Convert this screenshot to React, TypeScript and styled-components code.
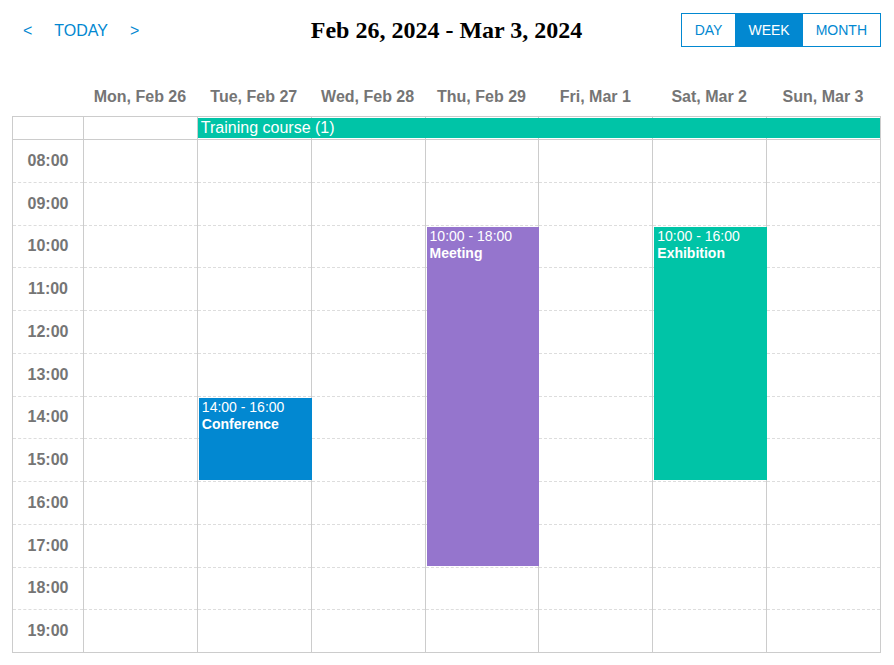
import React from 'react';
import styled, { createGlobalStyle } from 'styled-components';

const SLOT = 42.75;
const START_HOUR = 8;
const hours = ['08:00', '09:00', '10:00', '11:00', '12:00', '13:00', '14:00', '15:00', '16:00', '17:00', '18:00', '19:00'];
const days = ['Mon, Feb 26', 'Tue, Feb 27', 'Wed, Feb 28', 'Thu, Feb 29', 'Fri, Mar 1', 'Sat, Mar 2', 'Sun, Mar 3'];

type CalEvent = { day: number; start: number; end: number; title: string; label: string; color: string };

const events: CalEvent[] = [
	{ day: 1, start: 14, end: 16, label: '14:00 - 16:00', title: 'Conference', color: '#0288d1' },
	{ day: 3, start: 10, end: 18, label: '10:00 - 18:00', title: 'Meeting', color: '#9575cd' },
	{ day: 5, start: 10, end: 16, label: '10:00 - 16:00', title: 'Exhibition', color: '#00c4a7' },
];

const GlobalStyle = createGlobalStyle`
	body {
		margin: 0;
		background: #fff;
		font-family: "Liberation Sans", Arial, sans-serif;
	}
`;

function App() {
	return (
		<Page>
			<GlobalStyle />
			<Toolbar>
				<NavGroup>
					<NavButton>&lt;</NavButton>
					<NavButton>TODAY</NavButton>
					<NavButton>&gt;</NavButton>
				</NavGroup>
				<Title>Feb 26, 2024 - Mar 3, 2024</Title>
				<ViewGroup>
					<ViewButton>DAY</ViewButton>
					<ViewButton $active>WEEK</ViewButton>
					<ViewButton>MONTH</ViewButton>
				</ViewGroup>
			</Toolbar>
			<DayHeader>
				<span />
				{days.map((d) => (
					<DayName key={d}>{d}</DayName>
				))}
			</DayHeader>
			<Calendar>
				<AllDayRow>
					<AllDayCell $col={1} $first />
					{days.map((d, i) => (
						<AllDayCell key={d} $col={i + 2} />
					))}
					<AllDayEvent $from={3} $to={9}>Training course (1)</AllDayEvent>
				</AllDayRow>
				<Body>
					<TimeColumn>
						{hours.map((h, i) => (
							<Slot key={h} $first={i === 0}>
								<TimeLabel>{h}</TimeLabel>
							</Slot>
						))}
					</TimeColumn>
					{days.map((d, di) => (
						<DayColumn key={d}>
							{hours.map((h, i) => (
								<Slot key={h} $first={i === 0} />
							))}
							{events
								.filter((e) => e.day === di)
								.map((e) => (
									<EventBox
										key={e.title}
										$color={e.color}
										style={{
											top: (e.start - START_HOUR) * SLOT + 2,
											height: (e.end - e.start) * SLOT - 3,
										}}
									>
										<EventTime>{e.label}</EventTime>
										<EventTitle>{e.title}</EventTitle>
									</EventBox>
								))}
						</DayColumn>
					))}
				</Body>
			</Calendar>
		</Page>
	);
}

const Page = styled.div`
	padding: 13px 13px 12px 12px;
	width: 894px;
	box-sizing: border-box;
`;

const Toolbar = styled.div`
	display: grid;
	grid-template-columns: 1fr auto 1fr;
	align-items: center;
	height: 34px;
`;

const NavGroup = styled.div`
	display: flex;
	align-items: center;
`;

const NavButton = styled.button`
	background: none;
	border: none;
	padding: 2px 11px 0;
	height: 34px;
	color: #0288d1;
	font-family: "Liberation Sans", Arial, sans-serif;
	font-size: 16px;
	cursor: pointer;
`;

const Title = styled.h1`
	margin: 0;
	font-family: "Liberation Serif", "Times New Roman", serif;
	font-weight: bold;
	font-size: 24px;
	color: #000;
`;

const ViewGroup = styled.div`
	justify-self: end;
	display: flex;
	border: 1px solid #0288d1;
	height: 34px;
	box-sizing: border-box;
`;

const ViewButton = styled.button<{ $active?: boolean }>`
	border: none;
	padding: 0 13px;
	font-family: "Liberation Sans", Arial, sans-serif;
	font-size: 14px;
	background: ${(p) => (p.$active ? '#0288d1' : '#fff')};
	color: ${(p) => (p.$active ? '#fff' : '#0288d1')};
	cursor: pointer;
`;

const DayHeader = styled.div`
	display: grid;
	grid-template-columns: 71px repeat(7, 1fr);
	margin-top: 30px;
	height: 39px;
	align-items: center;
	width: 869px;
	box-sizing: border-box;
	padding-right: 1px;
`;

const DayName = styled.div`
	text-align: center;
	font-weight: bold;
	font-size: 16px;
	color: #757575;
	white-space: nowrap;
`;

const Calendar = styled.div`
	width: 869px;
	box-sizing: border-box;
	border: 1px solid #ccc;
`;

const AllDayRow = styled.div`
	display: grid;
	grid-template-columns: 70px repeat(7, 1fr);
	height: 22px;
`;

const AllDayCell = styled.div<{ $col: number; $first?: boolean }>`
	grid-row: 1;
	grid-column: ${(p) => p.$col};
	border-left: ${(p) => (p.$first ? 'none' : '1px solid #ccc')};
`;

const AllDayEvent = styled.div<{ $from: number; $to: number }>`
	grid-row: 1;
	grid-column: ${(p) => `${p.$from} / ${p.$to}`};
	margin: 1px 0 1px 1px;
	background: #00c4a7;
	color: #fff;
	font-size: 16px;
	line-height: 20px;
	padding: 0 3px;
	white-space: nowrap;
	overflow: hidden;
`;

const Body = styled.div`
	display: flex;
`;

const TimeColumn = styled.div`
	width: 70px;
	flex: none;
`;

const DayColumn = styled.div`
	flex: 1;
	min-width: 0;
	position: relative;
	border-left: 1px solid #ccc;
`;

const Slot = styled.div<{ $first?: boolean }>`
	height: ${SLOT}px;
	box-sizing: border-box;
	border-top: ${(p) => (p.$first ? '1px solid #ccc' : '1px dashed #ddd')};
	display: flex;
	align-items: center;
	justify-content: center;
`;

const TimeLabel = styled.span`
	font-weight: bold;
	font-size: 16px;
	color: #757575;
`;

const EventBox = styled.div<{ $color: string }>`
	position: absolute;
	left: 1px;
	width: 100%;
	box-sizing: border-box;
	background: ${(p) => p.$color};
	color: #fff;
	padding: 1px 3px;
	font-size: 14px;
	line-height: 17px;
	overflow: hidden;
	z-index: 1;
`;

const EventTime = styled.div``;

const EventTitle = styled.div`
	font-weight: bold;
`;

export default App;
